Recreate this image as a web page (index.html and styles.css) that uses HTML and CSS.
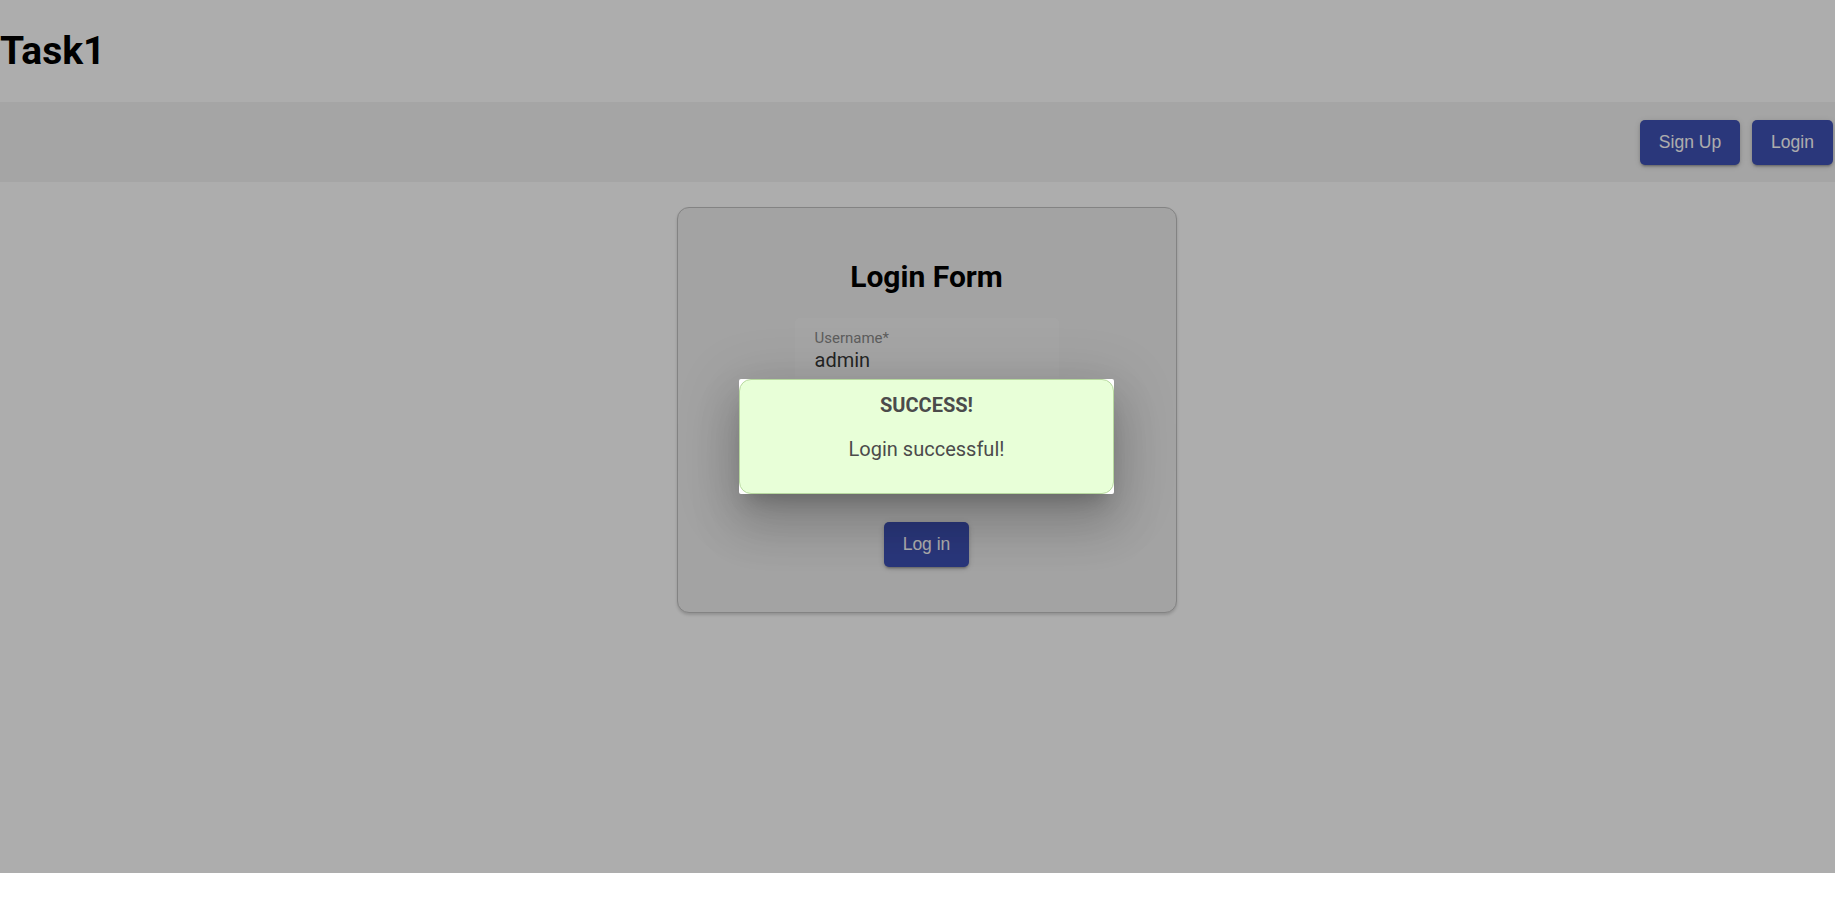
FILE: index.html
```html
<!DOCTYPE html>
<html lang="en">
<head>
<meta charset="utf-8">
<title>Task1</title>
<link rel="stylesheet" href="styles.css">
</head>
<body>
<div class="app">
  <header class="header">
    <h1 class="title">Task1</h1>
  </header>
  <nav class="toolbar">
    <button class="btn">Sign Up</button>
    <button class="btn">Login</button>
  </nav>
  <main class="main">
    <form class="card">
      <h2 class="card-title">Login Form</h2>
      <div class="field">
        <label class="field-label">Username*</label>
        <div class="field-value">admin</div>
      </div>
      <div class="field">
        <label class="field-label">Password*</label>
        <div class="field-value">•••••</div>
      </div>
      <button type="button" class="btn btn-submit">Log in</button>
    </form>
  </main>
  <div class="overlay">
    <div class="dialog">
      <div class="dialog-inner">
        <div class="dialog-title">SUCCESS!</div>
        <div class="dialog-text">Login successful!</div>
      </div>
    </div>
  </div>
</div>
</body>
</html>
```

FILE: styles.css
```css
html, body {
  margin: 0;
  padding: 0;
  background: #ffffff;
  overflow: hidden;
}

.app {
  position: relative;
  width: 1853px;
  height: 873px;
  font-family: Roboto, "Liberation Sans", sans-serif;
  background: #ffffff;
}

.header {
  height: 102px;
}

.title {
  margin: 0;
  padding-top: 28px;
  font-size: 39px;
  line-height: 47px;
  font-weight: 700;
  color: #000;
}

.toolbar {
  height: 80px;
  background: #f3f3f3;
  display: flex;
  align-items: center;
  justify-content: flex-end;
  gap: 12px;
  padding: 0 20px;
}

.btn {
  height: 45px;
  padding: 0;
  border: none;
  border-radius: 5px;
  background: #3f51b5;
  color: #ffffff;
  font-family: "Liberation Sans", Arial, sans-serif;
  font-size: 17.5px;
  white-space: nowrap;
  box-shadow: 0 3px 2px -2px rgba(0,0,0,.2), 0 2px 3px 0 rgba(0,0,0,.14), 0 1px 6px 0 rgba(0,0,0,.12);
}

.toolbar .btn:first-child {
  width: 100px;
}

.toolbar .btn:last-child {
  width: 81px;
}

.main {
  display: flex;
  justify-content: center;
  padding-top: 25px;
}

.card {
  box-sizing: border-box;
  width: 500px;
  height: 406px;
  border: 1px solid #c2c2c2;
  border-radius: 12px;
  background: #f0f0f0;
  box-shadow: 0 2px 3px rgba(0,0,0,.16);
  display: flex;
  flex-direction: column;
  align-items: center;
  padding-top: 51px;
}

.card-title {
  margin: 0;
  font-size: 30px;
  line-height: 35px;
  font-weight: 700;
  color: #000;
}

.field {
  box-sizing: border-box;
  width: 264px;
  height: 70px;
  margin-top: 24px;
  padding: 11px 20px 0;
  background: #f4f4f4;
  border-radius: 5px 5px 0 0;
  border-bottom: 1px solid #8a8a8a;
}

.field + .field {
  margin-top: 22px;
}

.field-label {
  display: block;
  font-size: 15px;
  line-height: 18px;
  color: #8a8a8a;
}

.field-value {
  margin-top: 2px;
  font-size: 20px;
  line-height: 23px;
  color: rgba(0,0,0,.8);
}

.btn-submit {
  margin-top: 42px;
  width: 85px;
}

.overlay {
  position: absolute;
  top: 0;
  left: 0;
  width: 100%;
  height: 100%;
  background: rgba(0,0,0,0.32);
  display: flex;
  align-items: center;
  justify-content: center;
}

.dialog {
  width: 375px;
  height: 115px;
  background: #ffffff;
  border-radius: 2px;
  box-shadow: 0 14px 19px -9px rgba(0,0,0,.2), 0 30px 48px 4px rgba(0,0,0,.14), 0 11px 58px 10px rgba(0,0,0,.12);
}

.dialog-inner {
  box-sizing: border-box;
  height: 100%;
  background: #e8ffd8;
  border: 1px solid #b7d89f;
  border-radius: 12px;
  text-align: center;
  color: #4b4b4b;
  padding-top: 14px;
}

.dialog-title {
  font-size: 20px;
  line-height: 23px;
  font-weight: 700;
}

.dialog-text {
  margin-top: 21px;
  font-size: 20px;
  line-height: 23px;
}
```
